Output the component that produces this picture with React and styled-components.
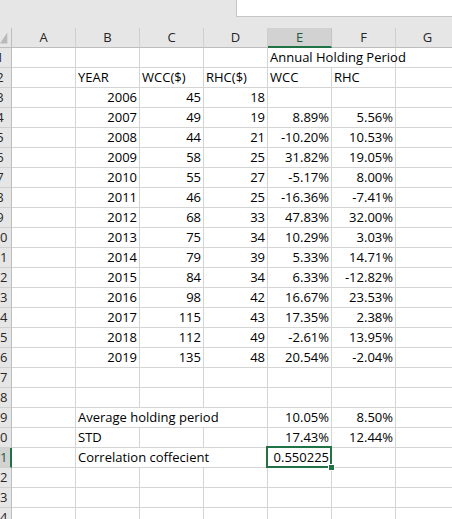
import React from 'react';
import styled, { createGlobalStyle } from 'styled-components';

const GlobalStyle = createGlobalStyle`
  html, body {
    margin: 0;
    padding: 0;
    background: #ffffff;
    overflow: hidden;
  }
  body {
    font-family: "Open Sans", "Liberation Sans", Arial, sans-serif;
  }
`;

const columns = ['A', 'B', 'C', 'D', 'E', 'F', 'G'];

// each row: [B, C, D, E, F]; null = covered by a spanning cell on the left
const rows = [
  ['', '', '', { text: 'Annual Holding Period', span: 2 }, null],
  ['YEAR', 'WCC($)', 'RHC($)', 'WCC', 'RHC'],
  [2006, 45, 18, '', ''],
  [2007, 49, 19, '8.89%', '5.56%'],
  [2008, 44, 21, '-10.20%', '10.53%'],
  [2009, 58, 25, '31.82%', '19.05%'],
  [2010, 55, 27, '-5.17%', '8.00%'],
  [2011, 46, 25, '-16.36%', '-7.41%'],
  [2012, 68, 33, '47.83%', '32.00%'],
  [2013, 75, 34, '10.29%', '3.03%'],
  [2014, 79, 39, '5.33%', '14.71%'],
  [2015, 84, 34, '6.33%', '-12.82%'],
  [2016, 98, 42, '16.67%', '23.53%'],
  [2017, 115, 43, '17.35%', '2.38%'],
  [2018, 112, 49, '-2.61%', '13.95%'],
  [2019, 135, 48, '20.54%', '-2.04%'],
  [],
  [],
  [{ text: 'Average holding period', span: 3 }, null, null, '10.05%', '8.50%'],
  ['STD', '', '', '17.43%', '12.44%'],
  [{ text: 'Correlation coffecient', span: 3 }, null, null, { text: '0.550225', selected: true }, ''],
  [],
  [],
  [],
];

const isLabel = (v) => typeof v === 'string' && !/^-?[\d.]+%?$/.test(v);

const App = () => {
  const renderCell = (value, key) => {
    if (value === null) return null;
    if (value === undefined || value === '') return <Cell key={key} />;
    if (typeof value === 'object') {
      return (
        <Cell
          key={key}
          $span={value.span}
          $align={isLabel(value.text) ? 'left' : 'right'}
          $selected={value.selected}
        >
          {value.text}
        </Cell>
      );
    }
    return (
      <Cell key={key} $align={isLabel(value) ? 'left' : 'right'}>
        {value}
      </Cell>
    );
  };

  return (
    <>
      <GlobalStyle />
      <Window>
        <TopBand>
          <FormulaBox />
        </TopBand>
        <Sheet>
          <Corner>
            <svg width="12" height="19" viewBox="0 0 12 19">
              <polygon points="0,16 8,16 8,4" fill="#b9b9b9" />
            </svg>
          </Corner>
          {columns.map((c) => (
            <ColHeader key={c} $active={c === 'E'}>{c}</ColHeader>
          ))}

          {rows.map((row, i) => {
            const n = i + 1;
            const cells = [];
            for (let j = 0; j < 6; j++) {
              const v = j === 0 ? undefined : row[j - 1];
              cells.push(renderCell(v, `${n}-${j}`));
            }
            return (
              <React.Fragment key={n}>
                <RowHeader $active={n === 21}>
                  <RowNumber>{n}</RowNumber>
                </RowHeader>
                {cells}
                <Cell />
              </React.Fragment>
            );
          })}
        </Sheet>
      </Window>
    </>
  );
};

const Window = styled.div`
  width: 452px;
  height: 519px;
  overflow: hidden;
  background: #ffffff;
`;

const TopBand = styled.div`
  height: 28px;
  background: #e6e6e6;
  display: flex;
  justify-content: flex-end;
  align-items: flex-start;
`;

const FormulaBox = styled.div`
  width: 216px;
  height: 17px;
  box-sizing: border-box;
  background: #ffffff;
  border-left: 1px solid #c6c6c6;
  border-bottom: 1px solid #c6c6c6;
`;

const Sheet = styled.div`
  display: grid;
  grid-template-columns: 12px repeat(7, 64px);
  grid-auto-rows: 20px;
  font-size: 13px;
  line-height: 19px;
  color: #000000;
`;

const Corner = styled.div`
  background: #e6e6e6;
  box-sizing: border-box;
  border-right: 1px solid #bdbdbd;
  border-bottom: 1px solid #bdbdbd;
  display: flex;
  align-items: flex-start;
`;

const ColHeader = styled.div`
  box-sizing: border-box;
  background: ${(p) => (p.$active ? '#d2d2d2' : '#e6e6e6')};
  border-right: 1px solid ${(p) => (p.$active ? '#c4c4c4' : '#cfcfcf')};
  border-bottom: ${(p) => (p.$active ? '2px solid #217346' : '1px solid #bdbdbd')};
  color: ${(p) => (p.$active ? '#1d5a38' : '#262626')};
  text-align: center;
  line-height: 19px;
`;

const RowHeader = styled.div`
  box-sizing: border-box;
  overflow: hidden;
  background: ${(p) => (p.$active ? '#d2d2d2' : '#e6e6e6')};
  border-right: ${(p) => (p.$active ? '2px solid #217346' : '1px solid #bdbdbd')};
  border-bottom: 1px solid #cfcfcf;
  color: ${(p) => (p.$active ? '#1d5a38' : '#262626')};
`;

const RowNumber = styled.span`
  display: block;
  width: 24px;
  margin-left: -12px;
  text-align: center;
`;

const Cell = styled.div`
  position: relative;
  box-sizing: border-box;
  grid-column: ${(p) => (p.$span ? `span ${p.$span}` : 'auto')};
  border-right: 1px solid #d4d4d4;
  border-bottom: 1px solid #d4d4d4;
  padding: 0 2px 0 2px;
  white-space: nowrap;
  overflow: visible;
  text-align: ${(p) => p.$align || 'left'};

  ${(p) =>
    p.$selected &&
    `
    &::after {
      content: '';
      position: absolute;
      top: -2px;
      left: -2px;
      right: -1px;
      bottom: -1px;
      border: 2px solid #217346;
      pointer-events: none;
    }
    &::before {
      content: '';
      position: absolute;
      right: -4px;
      bottom: -4px;
      width: 5px;
      height: 5px;
      background: #217346;
      border: 1px solid #ffffff;
      z-index: 1;
    }
  `}
`;

export default App;
